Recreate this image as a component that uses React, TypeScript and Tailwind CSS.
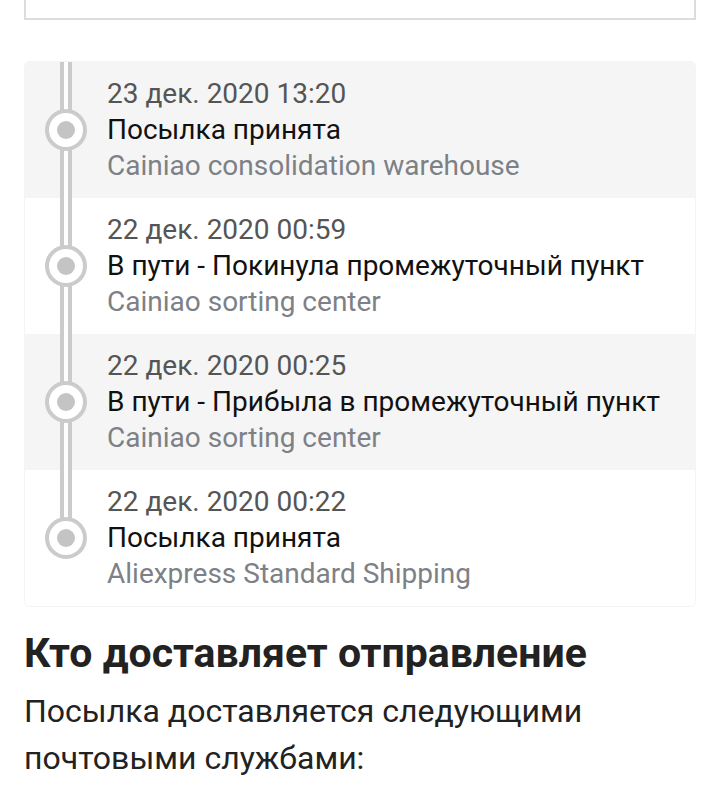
const events = [
  { date: "23 дек. 2020 13:20", title: "Посылка принята", place: "Cainiao consolidation warehouse" },
  { date: "22 дек. 2020 00:59", title: "В пути - Покинула промежуточный пункт", place: "Cainiao sorting center" },
  { date: "22 дек. 2020 00:25", title: "В пути - Прибыла в промежуточный пункт", place: "Cainiao sorting center" },
  { date: "22 дек. 2020 00:22", title: "Посылка принята", place: "Aliexpress Standard Shipping" },
]

export default function App() {
  return (
    <div className="min-h-[811px] bg-white px-6 font-['Roboto',sans-serif] overflow-hidden">
      {/* box cut off at the top */}
      <div className="h-6 -mt-1 border-x-2 border-b-2 border-[#dcdcdc]" />

      {/* tracking timeline */}
      <div className="mt-[41px] rounded-md border border-[#f4f4f4] overflow-hidden">
        {events.map((e, i) => (
          <div key={i} className={`flex h-[136px] ${i % 2 === 0 ? "bg-[#f5f5f5]" : "bg-white"}`}>
            <div className="relative w-[82px] shrink-0 flex items-center justify-center">
              <div
                className={`absolute left-[35px] w-[12px] border-x-[4px] border-[#cbcbcb] bg-white top-0 ${i === events.length - 1 ? "h-1/2" : "bottom-0"}`}
              />
              <div className="relative w-[42px] h-[42px] rounded-full border-[4px] border-[#cbcbcb] bg-white flex items-center justify-center -ml-[1px]">
                <div className="w-[18px] h-[18px] rounded-full bg-[#c4c4c4]" />
              </div>
            </div>
            <div className="flex flex-col justify-center text-[28px] leading-[36px]">
              <p className="text-[#555555]">{e.date}</p>
              <p className="text-[#111111]">{e.title}</p>
              <p className="text-[#7d8186]">{e.place}</p>
            </div>
          </div>
        ))}
      </div>

      <h2 className="mt-[22px] text-[41px] leading-[48px] font-bold text-[#222222]">Кто доставляет отправление</h2>
      <p className="mt-[11px] text-[32px] leading-[47px] text-[#222222]">
        Посылка доставляется следующими почтовыми службами:
      </p>
    </div>
  )
}
